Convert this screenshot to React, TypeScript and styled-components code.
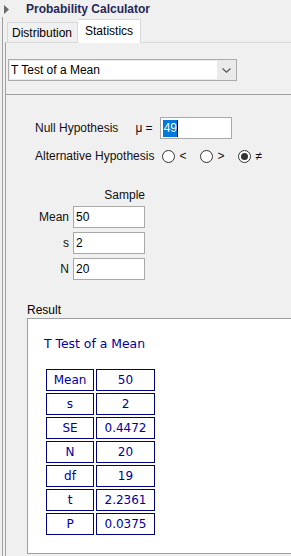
import React from "react";
import styled, { createGlobalStyle } from "styled-components";

const Global = createGlobalStyle`
  html, body { margin: 0; padding: 0; background: #f0f0f0; }
  body { font-family: "Liberation Sans", Arial, sans-serif; font-size: 12px; color: #111; }
  * { box-sizing: border-box; }
`;

const Page = styled.div`
  width: 291px;
  height: 556px;
  overflow: hidden;
  background: #f0f0f0;
  display: flex;
  flex-direction: column;
`;

const TitleBar = styled.div`
  height: 17px;
  flex: none;
  display: flex;
  align-items: center;
  padding-left: 4px;
  padding-top: 1px;
  gap: 17px;
`;

const TitleText = styled.span`
  font-weight: bold;
  font-size: 12px;
  color: #272755;
  line-height: 16px;
`;

const Frame = styled.div`
  flex: 1;
  margin-left: 2px;
  border-left: 1px solid #a0a0a0;
  padding-left: 2px;
  display: flex;
  flex-direction: column;
  min-height: 0;
`;

const TabStrip = styled.div`
  height: 25px;
  flex: none;
  display: flex;
  align-items: flex-end;
  padding-left: 2px;
`;

const Tab = styled.div<{ $active?: boolean }>`
  height: ${(p) => (p.$active ? 24 : 20)}px;
  margin-bottom: ${(p) => (p.$active ? -1 : 0)}px;
  position: relative;
  z-index: ${(p) => (p.$active ? 1 : 0)};
  display: flex;
  align-items: center;
  padding: ${(p) => (p.$active ? "0 7px 1px 7px" : "0 5px 0 4px")};
  background: ${(p) => (p.$active ? "#ffffff" : "#f0f0f0")};
  border: 1px solid #d9d9d9;
  border-bottom: none;
  border-left: ${(p) => (p.$active ? "none" : "1px solid #d9d9d9")};
  font-size: 12px;
  color: #000;
`;

const TabBody = styled.div`
  flex: 1;
  border-top: 1px solid #d9d9d9;
  border-left: 1px solid #a0a0a0;
  display: flex;
  flex-direction: column;
  min-height: 0;
`;

const SelectWrap = styled.div`
  padding: 16px 0 0 2px;
  flex: none;
`;

const Select = styled.div`
  width: 229px;
  height: 22px;
  border: 1px solid #acacac;
  background: #eaeaea;
  padding: 1px;
  display: flex;
  align-items: stretch;
`;

const SelectField = styled.div`
  width: 207px;
  background: #fff;
  padding-left: 1px;
  display: flex;
  align-items: center;
  font-size: 12px;
  color: #000;
`;

const SelectArrow = styled.div`
  flex: 1;
  display: flex;
  align-items: center;
  justify-content: center;
`;

const Panel = styled.div`
  margin-top: 13px;
  flex: 1;
  border-top: 1px solid #a0a0a0;
  padding-left: 21px;
  display: flex;
  flex-direction: column;
`;

const Section = styled.div`
  padding-left: 8px;
`;

const NullRow = styled.div`
  margin-top: 22px;
  height: 22px;
  display: flex;
  align-items: center;
`;

const Label = styled.span`
  font-size: 12px;
  color: #111;
  white-space: nowrap;
`;

const MuLabel = styled(Label)`
  margin-left: 17px;
  margin-right: 7px;
`;

const TextInput = styled.div<{ $w?: number }>`
  width: ${(p) => p.$w ?? 72}px;
  height: 22px;
  border: 1px solid #a9a9a9;
  background: #fff;
  display: flex;
  align-items: center;
  padding-left: 2px;
  font-size: 12px;
  color: #000;
`;

const Selected = styled.span`
  background: #0078d7;
  color: #fff;
  line-height: 17px;
  padding: 0 0 0 1px;
`;

const Caret = styled.span`
  width: 1px;
  height: 17px;
  background: #000;
`;

const AltRow = styled.div`
  margin-top: 7px;
  height: 20px;
  display: flex;
  align-items: center;
`;

const Options = styled.div`
  display: flex;
  align-items: center;
  gap: 13px;
  margin-left: 8px;
`;

const Option = styled.div`
  display: flex;
  align-items: center;
  gap: 4px;
`;

const Radio = styled.span<{ $checked?: boolean }>`
  width: 13px;
  height: 13px;
  border-radius: 50%;
  border: 1px solid #333;
  background: #fff;
  display: flex;
  align-items: center;
  justify-content: center;
  &::after {
    content: "";
    width: 7px;
    height: 7px;
    border-radius: 50%;
    background: ${(p) => (p.$checked ? "#333" : "transparent")};
  }
`;

const OptionLabel = styled.span`
  width: 8px;
  font-size: 12px;
  color: #111;
  line-height: 14px;
`;

const SampleGrid = styled.div`
  margin-top: 22px;
  display: grid;
  grid-template-columns: 34px 72px;
  column-gap: 4px;
  row-gap: 4px;
  align-items: center;
`;

const SampleHeader = styled.div`
  grid-column: 1 / span 2;
  text-align: right;
  line-height: 14px;
  font-size: 12px;
  color: #111;
`;

const RowLabel = styled.div`
  text-align: right;
  font-size: 12px;
  color: #111;
`;

const ResultLabel = styled.div`
  margin-top: 23px;
  line-height: 15px;
  font-size: 12px;
  color: #000;
`;

const ResultBox = styled.div`
  width: 300px;
  flex: none;
  background: #fff;
  border: 1px solid #a0a0a0;
  padding: 17px 0 16px 16px;
  font-family: "DejaVu Sans", Verdana, sans-serif;
`;

const ResultTitle = styled.div`
  font-size: 12.4px;
  line-height: 15px;
  color: #0000a0;
`;

const Table = styled.table`
  margin-top: 16px;
  border-collapse: separate;
  border-spacing: 2px;
`;

const Cell = styled.td<{ $w: number }>`
  width: ${(p) => p.$w}px;
  height: 22px;
  padding: 0;
  border: 1px solid #000080;
  text-align: center;
  font-size: 12px;
  line-height: 20px;
  color: #00009c;
  box-sizing: border-box;
`;

const rows: [string, string][] = [
  ["Mean", "50"],
  ["s", "2"],
  ["SE", "0.4472"],
  ["N", "20"],
  ["df", "19"],
  ["t", "2.2361"],
  ["P", "0.0375"],
];

export default function App() {
  return (
    <Page>
      <Global />
      <TitleBar>
        <svg width="5" height="9" viewBox="0 0 5 9">
          <path d="M0 0 L5 4.5 L0 9 Z" fill="#6a6a6a" />
        </svg>
        <TitleText>Probability Calculator</TitleText>
      </TitleBar>
      <Frame>
        <TabStrip>
          <Tab>Distribution</Tab>
          <Tab $active>Statistics</Tab>
        </TabStrip>
        <TabBody>
          <SelectWrap>
            <Select>
              <SelectField>T Test of a Mean</SelectField>
              <SelectArrow>
                <svg width="9" height="5" viewBox="0 0 9 5">
                  <path d="M0.5 0.5 L4.5 4.2 L8.5 0.5" fill="none" stroke="#555" strokeWidth="1.2" />
                </svg>
              </SelectArrow>
            </Select>
          </SelectWrap>
          <Panel>
            <Section>
              <NullRow>
                <Label>Null Hypothesis</Label>
                <MuLabel>μ =</MuLabel>
                <TextInput>
                  <Selected>49</Selected>
                  <Caret />
                </TextInput>
              </NullRow>
              <AltRow>
                <Label>Alternative Hypothesis</Label>
                <Options>
                  <Option>
                    <Radio />
                    <OptionLabel>&lt;</OptionLabel>
                  </Option>
                  <Option>
                    <Radio />
                    <OptionLabel>&gt;</OptionLabel>
                  </Option>
                  <Option>
                    <Radio $checked />
                    <OptionLabel>≠</OptionLabel>
                  </Option>
                </Options>
              </AltRow>
              <SampleGrid>
                <SampleHeader>Sample</SampleHeader>
                <RowLabel>Mean</RowLabel>
                <TextInput>50</TextInput>
                <RowLabel>s</RowLabel>
                <TextInput>2</TextInput>
                <RowLabel>N</RowLabel>
                <TextInput>20</TextInput>
              </SampleGrid>
            </Section>
            <ResultLabel>Result</ResultLabel>
            <ResultBox>
              <ResultTitle>T Test of a Mean</ResultTitle>
              <Table>
                <tbody>
                  {rows.map(([k, v]) => (
                    <tr key={k}>
                      <Cell $w={48}>{k}</Cell>
                      <Cell $w={59}>{v}</Cell>
                    </tr>
                  ))}
                </tbody>
              </Table>
            </ResultBox>
          </Panel>
        </TabBody>
      </Frame>
    </Page>
  );
}
